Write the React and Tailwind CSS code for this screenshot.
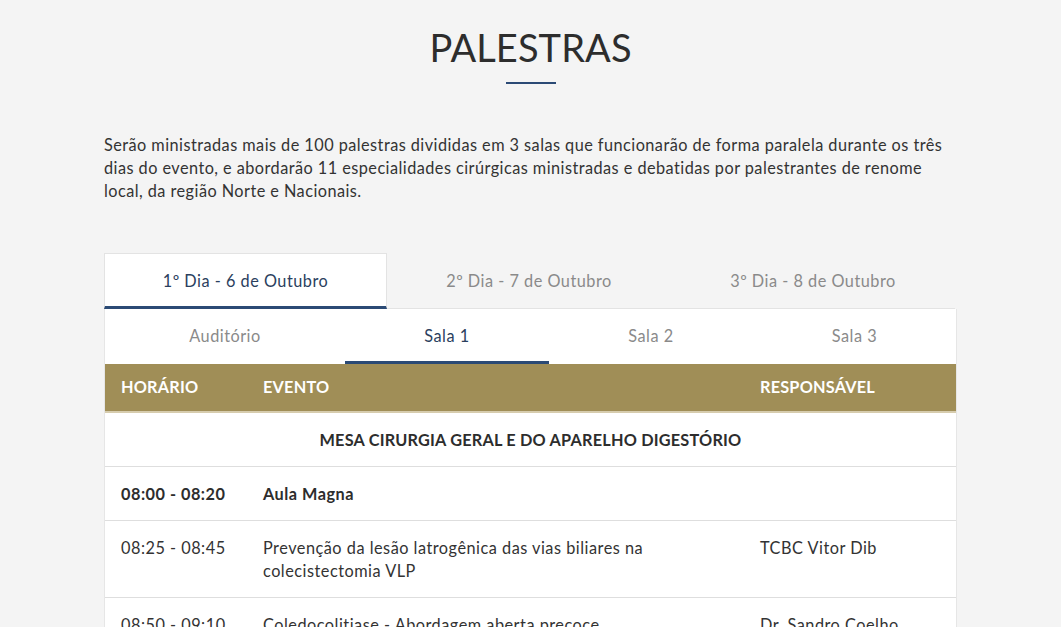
import React, { useState } from "react";

const days = ["1º Dia - 6 de Outubro", "2º Dia - 7 de Outubro", "3º Dia - 8 de Outubro"];
const rooms = ["Auditório", "Sala 1", "Sala 2", "Sala 3"];

const rows = [
  { type: "section", title: "MESA CIRURGIA GERAL E DO APARELHO DIGESTÓRIO" },
  { time: "08:00 - 08:20", event: "Aula Magna", who: "", bold: true },
  {
    time: "08:25 - 08:45",
    event: "Prevenção da lesão latrogênica das vias biliares na colecistectomia VLP",
    who: "TCBC Vitor Dib",
  },
  { time: "08:50 - 09:10", event: "Coledocolitiase - Abordagem aberta precoce", who: "Dr. Sandro Coelho" },
  { time: "09:15 - 09:35", event: "Tratamento endoscópico", who: "Dr. Fulano" },
];

export default function App() {
  const [day, setDay] = useState(0);
  const [room, setRoom] = useState(1);

  return (
    <div
      className="min-h-screen bg-[#f4f4f4] text-[#333] tracking-[0.5px]"
      style={{ fontFamily: "Lato, 'Open Sans', sans-serif" }}
    >
      <div className="w-[853px] mx-auto pt-[23px] pb-10">
        {/* TITLE */}
        <h1 className="text-center text-[38px] leading-[48px] font-normal text-[#2d2d2d] tracking-[0.1px]">
          PALESTRAS
        </h1>
        <div className="w-[50px] h-[2px] bg-[#2b4a75] mx-auto mt-[11px]"></div>

        <p className="mt-[49px] text-[16.3px] leading-[23px] text-[#333] tracking-[0.45px]">
          Serão ministradas mais de 100 palestras divididas em 3 salas que funcionarão de forma paralela durante os três
          dias do evento, e abordarão 11 especialidades cirúrgicas ministradas e debatidas por palestrantes de renome
          local, da região Norte e Nacionais.
        </p>

        {/* DAY TABS */}
        <div className="mt-[51px] flex">
          {days.map((d, i) => (
            <button
              key={d}
              onClick={() => setDay(i)}
              className={
                i === day
                  ? "w-[283px] h-[56px] pt-[2px] bg-white border border-b-0 border-[#e3e3e3] border-b-[3px] border-b-[#2b4a75] text-[16.3px] text-[#2b3f5e]"
                  : "w-[284px] h-[56px] pt-[2px] border-b border-[#e3e3e3] text-[16.3px] text-[#8a8a8a]"
              }
            >
              {d}
            </button>
          ))}
        </div>

        {/* PANEL */}
        <div className="bg-white border-x border-[#e6e6e6]">
          <div className="grid grid-cols-[240px_204px_204px_1fr]">
            {rooms.map((r, i) => (
              <button
                key={r}
                onClick={() => setRoom(i)}
                className={
                  i === room
                    ? "h-[55px] pt-[3px] border-b-[3px] border-[#2b4a75] text-[16.3px] text-[#2b3f5e]"
                    : "h-[55px] pt-[3px] border-b-[3px] border-transparent text-[16.3px] text-[#8a8a8a]"
                }
              >
                {r}
              </button>
            ))}
          </div>

          {/* TABLE HEADER */}
          <div className="grid grid-cols-[142px_497px_1fr] bg-[#a08e57] border-b-2 border-[#d6ccae] h-[49px] items-center text-white font-bold text-[16.3px] tracking-[0.2px]">
            <div className="pl-4">HORÁRIO</div>
            <div className="pl-4">EVENTO</div>
            <div className="pl-4">RESPONSÁVEL</div>
          </div>

          {rows.map((r, i) =>
            r.type === "section" ? (
              <div key={i} className="py-[15px] leading-[23px] text-center font-bold text-[16.3px] text-[#2d2d2d] border-b border-[#dedede] tracking-[0.2px]">
                {r.title}
              </div>
            ) : (
              <div
                key={i}
                className="grid grid-cols-[142px_497px_1fr] py-[15px] leading-[23px] text-[16.3px] border-b border-[#dedede]"
              >
                <div className={r.bold ? "pl-4 font-bold text-[#2d2d2d]" : "pl-4"}>{r.time}</div>
                <div className={r.bold ? "pl-4 pr-6 font-bold text-[#2d2d2d]" : "pl-4 pr-6"}>{r.event}</div>
                <div className="pl-4">{r.who}</div>
              </div>
            )
          )}
        </div>
      </div>
    </div>
  );
}
